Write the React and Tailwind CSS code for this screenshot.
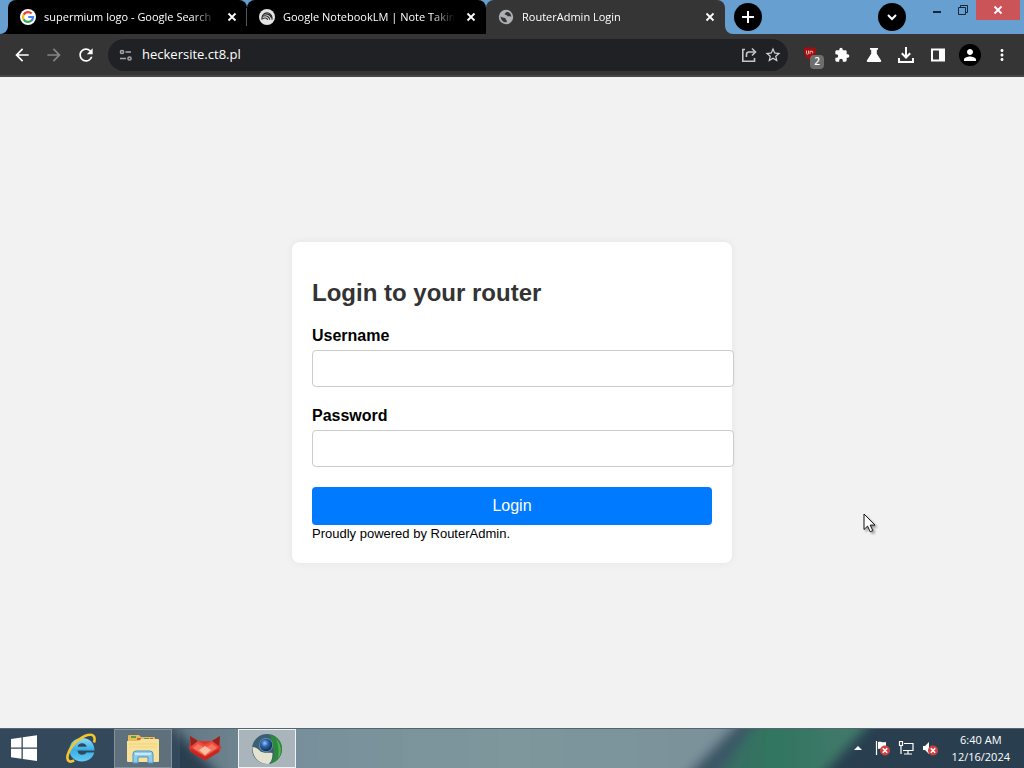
import React from 'react'

import {
    MdArrowBack,
    MdArrowForward,
    MdRefresh,
    MdStarBorder,
    MdExtension,
    MdPerson,
    MdMoreVert
} from 'react-icons/md'

function GoogleIcon() {
    return (
        <svg viewBox="0 0 16 16" className="size-4 shrink-0">
            <circle cx="8" cy="8" r="8" fill="#fff" />
            <g fill="none" strokeWidth="2.2">
                <path d="M11.6 4.6A5 5 0 0 0 3.6 5.8" stroke="#ea4335" />
                <path d="M3.6 5.6A5 5 0 0 0 3.6 10.4" stroke="#fbbc05" />
                <path d="M3.6 10.2A5 5 0 0 0 11.3 11.7" stroke="#34a853" />
                <path d="M11.2 11.8A5 5 0 0 0 13 8H8.2" stroke="#4285f4" />
            </g>
        </svg>
    )
}

function NotebookIcon() {
    return (
        <svg viewBox="0 0 16 16" className="size-4 shrink-0">
            <circle cx="8" cy="8" r="8" fill="#e4e4e4" />
            <g fill="none" stroke="#222" strokeWidth="1.1">
                <path d="M3 10.800V8.800a5 5 0 0 1 10 0v2" />
                <path d="M3.400 7.200c3.800-1.400 7 .2 7.400 3.600" />
                <path d="M5 5c3.800-.6 6.600 1.400 7.600 4" />
                <path d="M3.400 9.600c2.600-1.200 4.800-.6 5.200 1.200" />
            </g>
        </svg>
    )
}

function GlobeIcon() {
    return (
        <svg viewBox="0 0 16 16" className="size-4 shrink-0">
            <circle cx="8" cy="8" r="7.200" fill="#aeb1b4" />
            <path d="M2.600 7.200c1.600 1.700 3.200 1.200 4.400 1.800 1.300.7.400 2 1.800 2.500v1.800C5.600 13.700 2.600 11 2.600 7.200zM8.600 2.700c-.2 1.300-2 1.200-2 2.300 0 1.200 2.200.5 2.700 1.800.4 1 2.600.5 4 .9-.1-2.700-2-4.700-4.700-5z" fill="#353535" />
        </svg>
    )
}

function TuneIcon() {
    return (
        <svg viewBox="0 0 16 16" className="size-4" fill="none" stroke="#a5a8ab" strokeWidth="1.500">
            <circle cx="4" cy="5" r="1.600" />
            <path d="M7.500 5H13M2 11.500H8" />
            <circle cx="11.500" cy="11.500" r="1.600" />
        </svg>
    )
}

function ShareIcon() {
    return (
        <svg viewBox="0 0 18 18" className="size-[18px]" fill="none" stroke="#c4c7c5" strokeWidth="1.600">
            <path d="M5 3.500H2.800v11.700h11.700V12" />
            <path d="M6.500 11V8.500a2.500 2.500 0 0 1 2.500-2.500h5.500" />
            <path d="M12 2.500L15.500 6 12 9.500" />
        </svg>
    )
}

function UblockIcon() {
    return (
        <span className="relative block size-5">
            <svg viewBox="0 0 20 20" className="size-5">
                <path d="M4 3c3 0 4.500-1 6-1s3 1 6 1c0 7-.5 9-6 12C4.500 12 4 10 4 3z" fill="#a00f0f" />
                <path d="M6.500 5.500v3c0 1 2 1 2 0v-3M10 9.200V6.200h2c1.200 0 1.200 2 0 2" fill="none" stroke="#f1c4c4" strokeWidth=".9" />
            </svg>
            <span className="absolute -right-1 -bottom-1 flex h-3.5 w-3.5 items-center justify-center rounded bg-[#6e6e6e] text-[10px] font-semibold text-white">2</span>
        </span>
    )
}

function FlaskIcon() {
    return (
        <svg viewBox="0 0 16 16" className="size-4" fill="#fff">
            <path d="M4 1h8v1.800h-1.200v4L15 13.200c.6 1-.1 1.800-1 1.800H2c-.9 0-1.600-.8-1-1.800l4.200-6.400v-4H4z" />
        </svg>
    )
}

function DownloadIcon() {
    return (
        <svg viewBox="0 0 18 18" className="size-[18px]" fill="none" stroke="#fff" strokeWidth="2">
            <path d="M9 1v10.500M4.800 7.300L9 11.500l4.200-4.200M2 12v4h14v-4" />
        </svg>
    )
}

function SidePanelIcon() {
    return (
        <svg viewBox="0 0 16 16" className="size-4">
            <path d="M1 1.500h14v13H1zM3 3.500v9h6v-9z" fill="#fff" fillRule="evenodd" />
        </svg>
    )
}

function CrossIcon() {
    return (
        <svg viewBox="0 0 10 10" className="size-2.5" fill="none" stroke="#fff" strokeWidth="1.800">
            <path d="M1.500 1.500l7 7M8.500 1.500l-7 7" />
        </svg>
    )
}

function WindowsLogo() {
    return (
        <svg viewBox="0 0 28 26" className="h-[26px] w-7" fill="#fff">
            <path d="M1 4l10.500-1.500v10H1zM12.800 2.300L27 .3v12.200H12.800zM1 13.800h10.500v10L1 22.300zM12.800 13.800H27V26l-14.200-2z" />
        </svg>
    )
}

function ExplorerE() {
    return (
        <svg viewBox="0 0 32 32" className="size-8">
            <defs>
                <linearGradient id="ie" x1="0" y1="0" x2="0" y2="1">
                    <stop offset="0" stopColor="#8fdcf8" />
                    <stop offset=".5" stopColor="#37aee8" />
                    <stop offset="1" stopColor="#65cbf3" />
                </linearGradient>
            </defs>
            <path d="M29.500 18.500H12.500c.2 2.800 2 4.200 4.600 4.200 2 0 3.500-.7 4.400-2.200h7.800c-1.500 5.500-6 9-12.500 9C9.400 29.500 4.500 24.500 4.500 17.800S9.500 6 16.800 6s12.700 4.600 12.700 12.500zM12.600 14.700h9c-.3-2-2-3.500-4.500-3.500s-4.100 1.500-4.500 3.500z" fill="url(#ie)" />
            <path d="M29 10.500C30.500 6 29 2.600 25.500 2.700 18.500 2.600 8 10.500 4 19.500c-2 4.500-2.200 8.500.3 9.800 1.300.6 3 .2 4.800-.9" fill="none" stroke="#f5c52c" strokeWidth="2.600" />
        </svg>
    )
}

function FolderIcon() {
    return (
        <svg viewBox="0 0 34 30" className="h-[30px] w-[34px]">
            <path d="M2 2q0-1 1-1h10l2 2h13q1 0 1 1v24H2z" fill="#e7bd5c" />
            <path d="M5 3h5M18 5h5" stroke="#609b48" strokeWidth="2" />
            <path d="M11 5h4M24 5h3" stroke="#c04a3a" strokeWidth="1.500" />
            <path d="M1 7h12l2-2h17q1 0 1 1v21q0 1-1 1H2q-1 0-1-1z" fill="#f8e29a" />
            <path d="M3 10h28M3 13h28" stroke="#f1d37c" />
            <path d="M7 29v-9q0-3 3-3h14q3 0 3 3v9h-5v-6H12v6z" fill="#8ecbed" stroke="#4c96c6" />
            <path d="M9 20h16" stroke="#dcf3fd" strokeWidth="1.500" />
        </svg>
    )
}

function FoxIcon() {
    return (
        <svg viewBox="0 0 34 26" className="h-[26px] w-[34px]">
            <path d="M2 1l8 5h14l8-5v9l1.500 2.500L31 17l-14 8.500L3 17 .5 12.500 2 10z" fill="#dc352f" />
            <path d="M2 1l8 5-7 5zM32 1l-8 5 7 5z" fill="#93251f" />
            <path d="M10 6l7 4 7-4 7 6-14 9-14-9z" fill="#ee4c3d" />
            <path d="M5 13l5-4 7 4 7-4 5 4-12 8z" fill="#f5765f" />
            <path d="M11 15l6-4 6 4-6 5z" fill="#fdc0a5" />
            <path d="M3 14l14 8 14-8v3l-14 8.500L3 17z" fill="#c9251f" />
        </svg>
    )
}

function SupermiumIcon() {
    return (
        <svg viewBox="0 0 32 32" className="size-8">
            <defs>
                <radialGradient id="ball" cx=".4" cy=".35" r=".7">
                    <stop offset="0" stopColor="#9cc8f5" />
                    <stop offset=".4" stopColor="#2b66ad" />
                    <stop offset="1" stopColor="#0c2348" />
                </radialGradient>
            </defs>
            <circle cx="16" cy="16" r="15" fill="#3d5f74" />
            <path d="M19 2c8 1 12 8 12 14s-4 13-12 14.600c4-5 5-11 3-17z" fill="#2b8a3a" />
            <path d="M25 6c5 5 7 13 2 20 1-7 1-13-2-20z" fill="#58ad55" />
            <path d="M1.500 14c3 0 6 2 8 4.500 4 2 9 1 12 1.500 0 5-1 9-4 10.900C8 31.500 1 24 1.500 14z" fill="#e4e3d2" />
            <circle cx="15" cy="12" r="7" fill="#6f93ad" />
            <circle cx="15" cy="12" r="6.200" fill="url(#ball)" />
        </svg>
    )
}

function RedCross() {
    return (
        <g>
            <circle cx="11" cy="10.500" r="5" fill="#d44040" />
            <path d="M8.800 8.300l4.400 4.400M13.200 8.300l-4.400 4.400" stroke="#fff" strokeWidth="1.600" />
        </g>
    )
}

// blurred desktop wallpaper behind the glass taskbar
function Wallpaper() {
    return (
        <svg viewBox="0 0 1024 40" preserveAspectRatio="none" className="absolute inset-0 h-full w-full">
            <defs>
                <filter id="soft" x="-10%" y="-50%" width="120%" height="200%">
                    <feGaussianBlur stdDeviation="7 3" />
                </filter>
                <linearGradient id="haze" x1="0" x2="1">
                    <stop offset="0" stopColor="#5f737f" />
                    <stop offset=".25" stopColor="#78909b" />
                    <stop offset=".6" stopColor="#7d979c" />
                    <stop offset="1" stopColor="#7a909b" />
                </linearGradient>
                <linearGradient id="leaf" x1="0" x2="1">
                    <stop offset="0" stopColor="#3c6a68" />
                    <stop offset=".4" stopColor="#32755f" />
                    <stop offset="1" stopColor="#477b70" />
                </linearGradient>
            </defs>
            <rect width="1024" height="40" fill="#293f50" />
            <rect width="180" height="40" fill="#33495b" />
            <g filter="url(#soft)">
                <path d="M154-20H752L674 60H232z" fill="url(#haze)" />
                <path d="M752-20H884L810 60H700z" fill="url(#leaf)" />
                <path d="M752-20h14L710 60H674z" fill="#3a5766" />
            </g>
            <path d="M0 .5H1024" stroke="#53656f" />
        </svg>
    )
}

function Tab({ icon, title, active, divider }) {
    return (
        <div className={active
            ? "relative flex h-full w-[239px] items-center gap-2 rounded-t-lg bg-[#353535] pr-[7px] pl-3 text-white"
            : "relative flex h-full w-[239px] items-center gap-2 rounded-t-lg bg-black pr-[7px] pl-3 text-white"}>
            {icon}
            <span className="min-w-0 flex-1 overflow-hidden whitespace-nowrap mask-r-from-[calc(100%-24px)] text-[11px]">{title}</span>
            <button type="button" aria-label="Close tab" className="flex size-4 items-center justify-center">
                <CrossIcon />
            </button>
            {divider && <span className="absolute top-2 right-0 h-[18px] w-px bg-[#55585c]"></span>}
        </div>
    )
}

function ToolButton({ label, children }) {
    return (
        <button type="button" aria-label={label} className="flex size-7 shrink-0 items-center justify-center text-white">
            {children}
        </button>
    )
}

function TabStrip() {
    return (
        <div className="flex h-[34px] bg-[#679fd0]">
            <div className="w-2 shrink-0 bg-black">
                <div className="h-full rounded-br-lg bg-[#679fd0]"></div>
            </div>
            <div className="flex h-full min-w-0">
                <Tab icon={<GoogleIcon />} title="supermium logo - Google Search" divider />
                <Tab icon={<NotebookIcon />} title="Google NotebookLM | Note Taking" />
                <Tab icon={<GlobeIcon />} title="RouterAdmin Login" active />
            </div>
            <div className="w-2 shrink-0 bg-[#353535]">
                <div className="h-full rounded-bl-lg bg-[#679fd0]"></div>
            </div>
            <button type="button" aria-label="New tab" className="mt-[3px] ml-px flex size-7 shrink-0 items-center justify-center rounded-full bg-black">
                <svg viewBox="0 0 12 12" className="size-3"><path d="M6 0v12M0 6h12" stroke="#fff" strokeWidth="2" /></svg>
            </button>
            <div className="flex-1"></div>
            <button type="button" aria-label="Search tabs" className="mt-[3px] mr-[18px] flex size-7 shrink-0 items-center justify-center rounded-full bg-black">
                <svg viewBox="0 0 12 12" className="size-3" fill="none"><path d="M2 4l4 4 4-4" stroke="#fff" strokeWidth="2" /></svg>
            </button>
            <div className="mr-1 flex h-5 shrink-0 text-[#16273a]">
                <button type="button" aria-label="Minimize" className="flex w-[26px] items-center justify-center">
                    <svg viewBox="0 0 12 12" className="size-3"><path d="M2 7h8v2H2z" fill="currentColor" /></svg>
                </button>
                <button type="button" aria-label="Restore" className="flex w-[26px] items-center justify-center">
                    <svg viewBox="0 0 12 12" className="size-3" fill="none" stroke="currentColor">
                        <path d="M1.500 3.500h7v7h-7zM3.500 3V1.500h7v7H9" />
                    </svg>
                </button>
                <button type="button" aria-label="Close" className="flex w-11 items-center justify-center bg-[#cb5459]">
                    <CrossIcon />
                </button>
            </div>
        </div>
    )
}

function Toolbar() {
    return (
        <div className="flex h-[43px] items-center gap-2 border-b-2 border-[#484644] bg-[#353535] px-2">
            <div className="flex gap-1">
                <ToolButton label="Back"><MdArrowBack className="size-5" stroke="currentColor" /></ToolButton>
                <ToolButton label="Forward"><MdArrowForward className="size-5 text-[#858585]" /></ToolButton>
                <ToolButton label="Reload"><MdRefresh className="size-5" stroke="currentColor" /></ToolButton>
            </div>
            <div className="flex h-8 min-w-0 flex-1 items-center gap-2 rounded-full bg-[#202124] pr-1.5 pl-2.5">
                <TuneIcon />
                <input aria-label="Address" defaultValue="heckersite.ct8.pl" className="min-w-0 flex-1 bg-transparent text-[13px] text-white outline-none" />
                <div className="flex gap-1.5">
                    <button type="button" aria-label="Share"><ShareIcon /></button>
                    <button type="button" aria-label="Bookmark"><MdStarBorder className="size-[18px] text-[#d4d6d8]" /></button>
                </div>
            </div>
            <div className="flex gap-1">
                <ToolButton label="Ad blocker"><UblockIcon /></ToolButton>
                <ToolButton label="Extensions"><MdExtension className="size-4" /></ToolButton>
                <ToolButton label="Experiments"><FlaskIcon /></ToolButton>
                <ToolButton label="Downloads"><DownloadIcon /></ToolButton>
                <ToolButton label="Side panel"><SidePanelIcon /></ToolButton>
                <ToolButton label="Profile">
                    <span className="flex size-[22px] items-center justify-center rounded-full bg-black">
                        <MdPerson className="size-[18px]" />
                    </span>
                </ToolButton>
                <ToolButton label="Menu"><MdMoreVert className="size-[18px]" /></ToolButton>
            </div>
        </div>
    )
}

function LoginForm() {
    const submit = (e) => {
        e.preventDefault()
    }

    return (
        <form onSubmit={submit} className="w-[440px] rounded-lg bg-white p-5 text-black shadow-[0_0_10px_rgba(0,0,0,0.06)]">
            <h2 className="mt-[17px] mb-5 text-2xl leading-7 font-bold text-[#333]">Login to your router</h2>
            <div className="flex flex-col gap-5">
                <div>
                    <label htmlFor="username" className="mb-1.5 block text-base leading-[17px] font-bold">Username</label>
                    <input type="text" id="username" className="box-content block h-[15px] w-full rounded border border-[#ccc] bg-white p-2.5 text-[13px]" />
                </div>
                <div>
                    <label htmlFor="password" className="mb-1.5 block text-base leading-[17px] font-bold">Password</label>
                    <input type="password" id="password" className="box-content block h-[15px] w-full rounded border border-[#ccc] bg-white p-2.5 text-[13px]" />
                </div>
                <button type="submit" className="h-[38px] w-full rounded bg-[#007bff] text-base text-white">Login</button>
            </div>
            <p className="text-[13px] leading-[18px]">Proudly powered by RouterAdmin.</p>
        </form>
    )
}

function Taskbar() {
    return (
        <footer className="relative h-10 shrink-0">
            <Wallpaper />
            <div className="relative flex h-full items-center justify-between">
                <div className="flex h-full items-center gap-1">
                    <button type="button" aria-label="Start" className="flex h-full w-12 items-center justify-center"><WindowsLogo /></button>
                    <button type="button" aria-label="Internet Explorer" className="flex h-full w-[58px] items-center justify-center"><ExplorerE /></button>
                    <button type="button" aria-label="File Explorer" className="mt-px flex h-[39px] w-[58px] items-center justify-center border border-[#84909a] bg-[#5f707d]"><FolderIcon /></button>
                    <button type="button" aria-label="Fox" className="flex h-full w-[58px] items-center justify-center"><FoxIcon /></button>
                    <button type="button" aria-label="Supermium" className="mt-px flex h-[39px] w-[58px] items-center justify-center border border-[#eef2f4] bg-[#a9b5ba]"><SupermiumIcon /></button>
                </div>
                <div className="flex h-full items-center gap-2 pr-3.5 text-white">
                    <button type="button" aria-label="Show hidden icons" className="flex size-4 items-center justify-center">
                        <svg viewBox="0 0 8 4" className="h-1 w-2"><path d="M4 0l4 4H0z" fill="#fff" /></svg>
                    </button>
                    <svg viewBox="0 0 16 16" className="size-4">
                        <path d="M2.500 1v14" stroke="#fff" strokeWidth="1.200" />
                        <path d="M4 2c3-1 4 1 8 0v7c-4 1-5-1-8 0z" fill="#fff" />
                        <RedCross />
                    </svg>
                    <svg viewBox="0 0 16 16" className="size-4" fill="none" stroke="#fff" strokeWidth="1.200">
                        <path d="M6 3.500h9v7H5M10 10.500V14M6 14h8M1.500 1.500h3v4h-3zM3 5.500V14" />
                    </svg>
                    <svg viewBox="0 0 16 16" className="size-4">
                        <path d="M1 6h2l4-4v12l-4-4H1z" fill="#fff" />
                        <RedCross />
                    </svg>
                    <div className="ml-1.5 flex flex-col items-center text-[11px] leading-[17px]">
                        <span>6:40 AM</span>
                        <span>12/16/2024</span>
                    </div>
                </div>
            </div>
        </footer>
    )
}

export default function App() {
    return (
        <div className="flex min-h-screen flex-col bg-[#f2f2f2] font-['Open_Sans','Noto_Sans',sans-serif]">
            <header>
                <TabStrip />
                <Toolbar />
            </header>
            <main className="relative flex flex-1 items-center justify-center font-['Liberation_Sans',Arial,sans-serif]">
                <LoginForm />
                <svg viewBox="0 0 14 21" className="absolute top-[436px] left-[863px] h-[21px] w-3.5 drop-shadow-[2px_2px_1px_rgba(0,0,0,0.35)]">
                    <path d="M1 1v15.500l3.600-3.400 2.600 5.700 2.600-1.200-2.600-5.500h4.800z" fill="#fff" stroke="#111" />
                </svg>
            </main>
            <Taskbar />
        </div>
    )
}
